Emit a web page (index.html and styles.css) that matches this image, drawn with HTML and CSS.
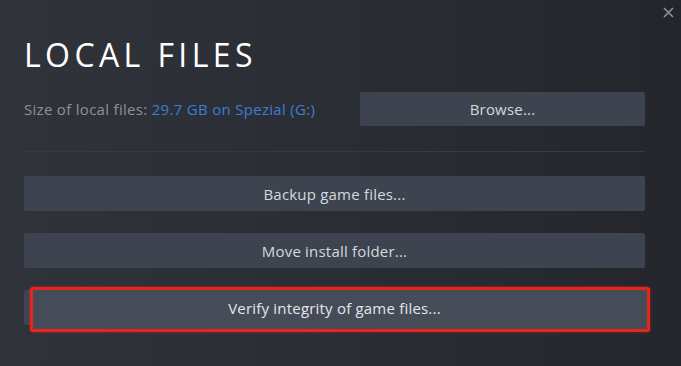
FILE: index.html
```html
<!DOCTYPE html>
<html lang="en">
<head>
<meta charset="utf-8">
<title>Local Files</title>
<link rel="stylesheet" href="styles.css">
</head>
<body>
<div class="dialog">
  <button class="close" aria-label="Close">
    <svg width="11" height="11" viewBox="0 0 11 11"><path d="M1 1L10 10M10 1L1 10" stroke="#8b9099" stroke-width="1.6" fill="none"/></svg>
  </button>
  <h1 class="title">LOCAL FILES</h1>
  <div class="size-row">
    <div class="size-text">Size of local files: <span class="size-value">29.7 GB on Spezial (G:)</span></div>
    <button class="btn browse">Browse...</button>
  </div>
  <div class="separator"></div>
  <div class="actions">
    <button class="btn">Backup game files...</button>
    <button class="btn">Move install folder...</button>
    <button class="btn verify"><span class="label">Verify integrity of game files...</span></button>
  </div>
</div>
</body>
</html>
```

FILE: styles.css
```css
html, body {
  margin: 0;
  height: 100%;
}
body {
  background: linear-gradient(90deg, #30333a 0%, #2a2d34 50%, #24262c 100%);
  font-family: "Open Sans", "Noto Sans", sans-serif;
  overflow: hidden;
}
.dialog {
  position: relative;
  padding: 33px 36px 0 24px;
}
.close {
  position: absolute;
  top: 7px;
  right: 7px;
  background: none;
  border: 0;
  padding: 0;
  width: 11px;
  height: 11px;
  display: flex;
}
.title {
  margin: 0;
  font-weight: 400;
  font-size: 32px;
  line-height: 44px;
  letter-spacing: 4.4px;
  color: #ffffff;
}
.size-row {
  display: flex;
  align-items: center;
  justify-content: space-between;
  margin-top: 15px;
}
.size-text {
  font-size: 15px;
  letter-spacing: 0.3px;
  color: #8b929b;
}
.size-value {
  color: #3b7ed6;
}
.btn {
  display: block;
  border: 0;
  border-radius: 2px;
  background: #3d4450;
  color: #d6d8db;
  font-family: inherit;
  font-size: 15px;
  letter-spacing: 0.2px;
  height: 35px;
  padding: 0;
  width: 100%;
}
.browse {
  width: 285px;
  height: 34px;
}
.separator {
  height: 1px;
  background: #363a42;
  margin-top: 25px;
}
.actions {
  display: flex;
  flex-direction: column;
  gap: 22px;
  margin-top: 24px;
}
.verify {
  position: relative;
  color: #e4e6e8;
}
.verify::before {
  content: "";
  position: absolute;
  left: 6px;
  right: -5px;
  top: -3px;
  bottom: -7px;
  border: 3px solid #e8241c;
  border-radius: 3px;
  background: #464c57;
  box-shadow: 0 0 3px rgba(232, 36, 28, 0.7);
}
.verify .label {
  position: relative;
}
```
